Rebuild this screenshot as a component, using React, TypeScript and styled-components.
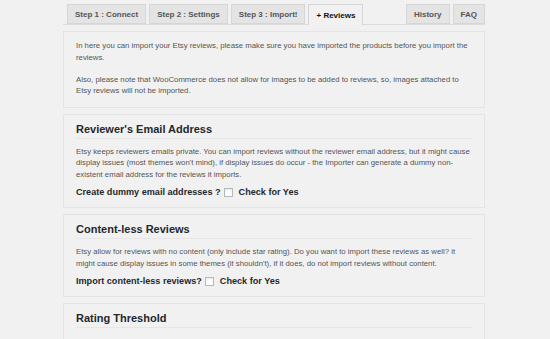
import React from "react";
import styled, { createGlobalStyle } from "styled-components";

const Global = createGlobalStyle`
  html, body { margin: 0; padding: 0; background: #f1f1f1; }
  body { font-family: "Liberation Sans", Arial, sans-serif; color: #444; }
`;

const Page = styled.div`
  width: 422px;
  margin-left: 63px;
  padding-top: 3px;
`;

const TabBar = styled.nav`
  display: flex;
  align-items: flex-end;
  gap: 3px;
  padding-left: 4px;
  border-bottom: 1px solid #dcdcdc;
  height: 21px;
`;

const Tab = styled.a<{ $active?: boolean; $pushRight?: boolean }>`
  display: flex;
  align-items: center;
  height: ${(p) => (p.$active ? "21px" : "20px")};
  margin-bottom: ${(p) => (p.$active ? "-1px" : "0")};
  padding: 0 7px;
  box-sizing: border-box;
  border: 1px solid #d6d6d6;
  border-bottom: ${(p) => (p.$active ? "none" : "1px solid #d6d6d6")};
  background: ${(p) => (p.$active ? "#f1f1f1" : "#e4e4e4")};
  color: ${(p) => (p.$active ? "#111" : "#555")};
  font-size: 8px;
  font-weight: bold;
  white-space: nowrap;
  margin-left: ${(p) => (p.$pushRight ? "auto" : "0")};
`;

const Panels = styled.div`
  display: flex;
  flex-direction: column;
  gap: 6px;
  margin-top: 6px;
`;

const Panel = styled.section<{ $intro?: boolean; $tail?: boolean }>`
  border: 1px solid #e4e4e4;
  padding: ${(p) => (p.$intro ? "8px 12px 10px" : "7px 12px 0")};
  padding-bottom: ${(p) => (p.$tail ? "40px" : undefined)};
`;

const Heading = styled.h2`
  margin: 0;
  font-size: 11px;
  line-height: 14px;
  font-weight: bold;
  color: #23282d;
  padding-bottom: 2px;
  border-bottom: 1px solid #e6e6e6;
`;

const Text = styled.p<{ $gap?: number }>`
  margin: ${(p) => p.$gap ?? 7}px 0 0;
  font-size: 7.75px;
  line-height: 11.5px;
  color: #555;
  &:first-child { margin-top: 0; }
`;

const OptionRow = styled.label`
  display: flex;
  align-items: center;
  gap: 3px;
  margin-top: 5px;
  padding-bottom: 8px;
  font-size: 9.1px;
  line-height: 14px;
  font-weight: bold;
  color: #23282d;
`;

const Box = styled.span`
  width: 7px;
  height: 7px;
  border: 1px solid #b4b9be;
  background: #fff;
  box-shadow: inset 0 1px 2px rgba(0, 0, 0, 0.1);
  margin: 0 3px 0 0;
`;

export default function App() {
  return (
    <>
      <Global />
      <Page>
        <TabBar>
          <Tab>Step 1 : Connect</Tab>
          <Tab>Step 2 : Settings</Tab>
          <Tab>Step 3 : Import!</Tab>
          <Tab $active>+ Reviews</Tab>
          <Tab $pushRight>History</Tab>
          <Tab>FAQ</Tab>
        </TabBar>
        <Panels>
          <Panel $intro>
            <Text>
              In here you can import your Etsy reviews, please make sure you have imported the products before you import the reviews.
            </Text>
            <Text $gap={10.5}>
              Also, please note that WooCommerce does not allow for images to be added to reviews, so, images attached to Etsy reviews will not be imported.
            </Text>
          </Panel>
          <Panel>
            <Heading>Reviewer's Email Address</Heading>
            <Text>
              Etsy keeps reviewers emails private. You can import reviews without the reviewer email address, but it might cause display issues (most themes won't mind), if display issues do occur - the Importer can generate a dummy non-existent email address for the reviews it imports.
            </Text>
            <OptionRow>
              Create dummy email addresses ?<Box /> Check for Yes
            </OptionRow>
          </Panel>
          <Panel>
            <Heading>Content-less Reviews</Heading>
            <Text>
              Etsy allow for reviews with no content (only include star rating). Do you want to import these reviews as well? it might cause display issues in some themes (it shouldn't), if it does, do not import reviews without content.
            </Text>
            <OptionRow>
              Import content-less reviews?<Box /> Check for Yes
            </OptionRow>
          </Panel>
          <Panel $tail>
            <Heading>Rating Threshold</Heading>
          </Panel>
        </Panels>
      </Page>
    </>
  );
}
